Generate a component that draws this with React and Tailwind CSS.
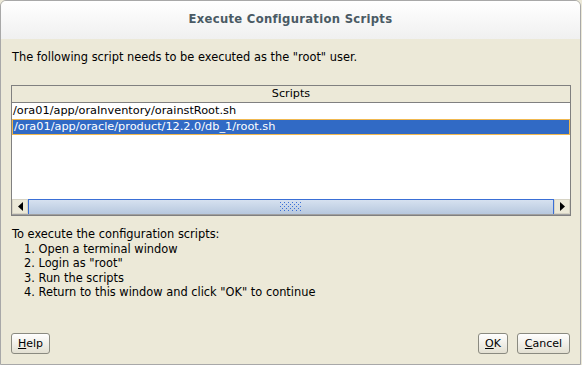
import React from "react";

const FONT = { fontFamily: "'DejaVu Sans', Verdana, sans-serif" };

function Btn({ children, className = "" }) {
  return (
    <button
      className={`h-[21px] rounded-[3px] border border-[#8a8a80] bg-gradient-to-b from-white to-[#e3e0d2] text-[11px] text-black leading-none px-0 ${className}`}
    >
      {children}
    </button>
  );
}

function Arrow({ dir }) {
  return (
    <div className="w-[16px] h-[15px] bg-[#ece9d8] border border-[#d6d3c4] flex items-center justify-center">
      <svg width="5" height="9" viewBox="0 0 5 9">
        {dir === "left" ? <path d="M5 0 L0 4.5 L5 9 Z" fill="#000" /> : <path d="M0 0 L5 4.5 L0 9 Z" fill="#000" />}
      </svg>
    </div>
  );
}

export default function App() {
  const steps = [
    "1. Open a terminal window",
    '2. Login as "root"',
    "3. Run the scripts",
    '4. Return to this window and click "OK" to continue',
  ];
  return (
    <div className="w-[582px] h-[365px] overflow-hidden bg-[#ece9d8]" style={FONT}>
      <div className="w-[581px] h-[365px] flex flex-col border border-[#a8a8a8] rounded-t-[6px] overflow-hidden">
        <div className="h-[38px] shrink-0 bg-gradient-to-b from-white to-[#f0f0f0] flex items-center justify-center">
          <span className="text-[11.6px] font-bold text-[#4a5a64] tracking-[0.3px]">Execute Configuration Scripts</span>
        </div>
        <div className="flex-1 flex flex-col px-[10px] bg-[#ece9d8]">
          <p className="text-[11.4px] text-black mt-[11px] ml-[1px] leading-[14px]">
            The following script needs to be executed as the "root" user.
          </p>
          <div className="mt-[21px] w-[560px] h-[131px] border border-[#808080] flex flex-col bg-white">
            <div className="h-[17px] bg-[#ece9d8] border-b border-[#808080] flex items-center justify-center text-[11.2px] text-black">
              Scripts
            </div>
            <div className="h-[16px] flex items-center px-[1px] text-[11.3px] text-black">
              /ora01/app/oraInventory/orainstRoot.sh
            </div>
            <div className="h-[16px] flex items-center px-[1px] text-[11.3px] text-white bg-[#316ac5] border border-[#f0b850]">
              /ora01/app/oracle/product/12.2.0/db_1/root.sh
            </div>
            <div className="flex-1" />
            <div className="h-[16px] flex border-b border-[#a0a0a0]">
              <Arrow dir="left" />
              <div className="flex-1 bg-gradient-to-b from-[#d6e1f0] to-[#b7c8de] border-t border-l border-r border-[#3a6fd6] flex items-center justify-center">
                <svg width="22" height="10" viewBox="0 0 22 10">
                  {[0, 1, 2, 3, 4].map((r) =>
                    [0, 1, 2, 3, 4, 5].map((c) => (
                      <rect key={`${r}-${c}`} x={c * 4 + (r % 2 ? 2 : 0)} y={r * 2} width="1" height="1" fill="#3a6fd6" />
                    ))
                  )}
                </svg>
              </div>
              <Arrow dir="right" />
            </div>
          </div>
          <div className="mt-[11px] ml-[1px] text-[11.4px] text-black leading-[14.5px]">
            <div>To execute the configuration scripts:</div>
            {steps.map((s) => (
              <div key={s} className="pl-[12px]">{s}</div>
            ))}
          </div>
          <div className="flex-1" />
          <div className="flex items-center mb-[10px] pl-[0px]">
            <Btn className="w-[39px]"><span className="underline">H</span>elp</Btn>
            <div className="flex-1" />
            <Btn className="w-[30px]"><span className="underline">O</span>K</Btn>
            <Btn className="w-[53px] ml-[9px]"><span className="underline">C</span>ancel</Btn>
          </div>
        </div>
      </div>
    </div>
  );
}
